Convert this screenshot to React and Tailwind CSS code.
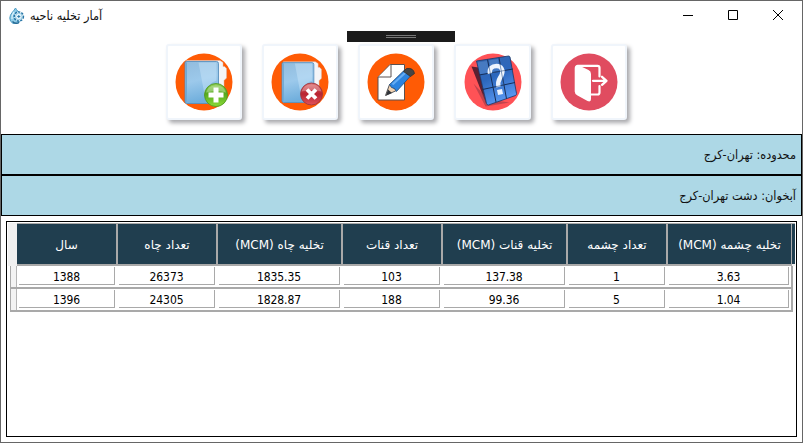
import React from 'react';

const columns = [
  { title: 'سال', cell: 'w-[100px]', values: ['1388', '1396'] },
  { title: 'تعداد چاه', cell: 'w-[100px]', values: ['26373', '24305'] },
  { title: 'تخلیه چاه (MCM)', cell: 'w-[125px]', values: ['1835.35', '1828.87'] },
  { title: 'تعداد قنات', cell: 'w-[100px]', values: ['103', '188'] },
  { title: 'تخلیه قنات (MCM)', cell: 'w-[125px]', values: ['137.38', '99.36'] },
  { title: 'تعداد چشمه', cell: 'w-[100px]', values: ['1', '5'] },
  { title: 'تخلیه چشمه (MCM)', cell: 'w-[125px]', values: ['3.63', '1.04'] },
];

function AppLogo() {
  return (
    <svg width="16" height="16" viewBox="0 0 16 16" className="shrink-0">
      <path d="M6.5 0C5 3 .8 6 .8 10a5.8 5.8 0 0 0 9 5l2-9C9.500 4 7.500 2 6.500 0Z" fill="#8fcbe6" stroke="#4d9cc4" strokeWidth="1" />
      <path d="M5 4C3.500 6 2.500 8 3 11" stroke="#d8f1fb" strokeWidth="1.300" fill="none" />
      <circle cx="9.800" cy="8.500" r="4.600" fill="#e4f4fb" stroke="#2675a6" strokeWidth="1.500" strokeDasharray="2.200 1.200" />
      <circle cx="9.800" cy="8.500" r="3.300" fill="#e4f4fb" stroke="#79b6d6" strokeWidth=".7" />
      <path d="M9.800 7v3M8.300 8.500h3" stroke="#2c7cab" strokeWidth="1" />
      <path d="M3.500 13.500c2 2 4.500 2 6.500 1" stroke="#24658f" strokeWidth="1.300" fill="none" />
    </svg>
  );
}

function Folder() {
  return (
    <>
      <path d="M11 7h33.500l3 2v4h1.500l2 2v9.500l-2.500 2.500v6L44 50H11Z" fill="#f4f5f8" stroke="#dcb9a8" strokeWidth=".5" />
      <path d="M9.500 8.500 11.500 8H41q2 0 2 2v40H11l-1.500-1Z" fill="url(#folderBlue)" stroke="#4b87b7" strokeWidth=".8" />
      <path d="M10.500 9h1v40h-1Z" fill="#6fa9d4" />
      <path d="M23 9h18v18c-6 2-10 7-12 14Z" fill="#d3eafc" opacity=".4" />
    </>
  );
}

function AddIcon() {
  return (
    <>
      <circle cx="28.500" cy="28.500" r="28.500" fill="#ff5b05" />
      <Folder />
      <circle cx="40.500" cy="41.500" r="11.500" fill="url(#badgeGreen)" stroke="#4b961c" strokeWidth=".8" />
      <path d="M30.500 39a10.500 10.500 0 0 1 20 0q-9-3-20 0Z" fill="#fff" opacity=".3" />
      <path d="M38 34h5v5h5v5h-5v5h-5v-5h-5v-5h5Z" fill="#fff" />
    </>
  );
}

function DeleteIcon() {
  return (
    <>
      <circle cx="28.500" cy="28.500" r="28.500" fill="#ff5b05" />
      <g transform="translate(1.500 1.500) scale(.95)"><Folder /></g>
      <circle cx="40" cy="40.500" r="11" fill="url(#badgeRed)" stroke="#98333b" strokeWidth=".8" />
      <path d="M30 38a10.500 10.500 0 0 1 20 0q-9-3-20 0Z" fill="#fff" opacity=".28" />
      <path d="m35.500 36 9 9m0-9-9 9" stroke="#fff" strokeWidth="3.800" />
    </>
  );
}

function EditIcon() {
  return (
    <>
      <circle cx="28.500" cy="28.500" r="28.500" fill="#ff5b05" />
      <path d="M22.500 11H37v35.500H10.500V23.500Z" fill="#fff" stroke="#5b5150" strokeWidth="1" />
      <path d="M23.500 11v12.500h-13" fill="#fff" stroke="#5b5150" strokeWidth="1" />
      <path d="m18 42 4-11 7 6Z" fill="#f2d3b2" stroke="#30343a" strokeWidth=".8" />
      <path d="m18.500 42 2-6 4 3.500Z" fill="#30343a" />
      <path d="m22 31 15-14.500 6 6L29 38l-2-3-3-1Z" fill="#2c83df" stroke="#274d79" strokeWidth=".8" />
      <path d="m25 31 13-12" stroke="#66acf2" strokeWidth="2.200" />
      <path d="m36 18 3-3q7-1 8 5l-4 3Z" fill="#454544" stroke="#303030" strokeWidth=".8" />
    </>
  );
}

function QueryIcon() {
  return (
    <>
      <circle cx="28.500" cy="28.500" r="28.500" fill="#ff5256" />
      <path d="m7 13 7 1 8 37Z" fill="#5b2031" />
      <path d="m9 30 12 23L45 49l-21-3Z" fill="#923746" opacity=".55" />
      <path d="m12 7.500 32-5q1 0 1.500 1L52 40q0 1.500-1 2l-27 9.500q-1.500 0-2-1.500Z" fill="url(#cubeBlue)" stroke="#163668" strokeWidth=".8" />
      <path d="m23 6 8.500 42.500M34.500 4.300l7.500 41M14.500 21.500 48.500 15.500M18 36 50.500 29" stroke="#162e58" strokeWidth="1" fill="none" />
      <path d="m13 9 9.500-1.500 2.300 11.500-9.500 1.800ZM24.500 7l9-1.500 2 11.500-9 1.700Z" fill="#a9d1ff" opacity=".18" />
      <path d="M25.500 20c-1-5 2-7.500 6.500-7.500 5 0 7 4 5.300 8.500-1.800 4.500-4.800 5.500-3.300 12.500" fill="none" stroke="#eef4fd" strokeWidth="4.400" />
      <path d="m32.500 36.500 5-1 1 5-5 1Z" fill="#eef4fd" />
      <path d="m24.500 13 1.500 8M35.300 9.500l4 22M27 19.300l13-2.300M29 33.700l10-2.100" stroke="#31588f" strokeWidth=".6" />
    </>
  );
}

function ExitIcon() {
  return (
    <>
      <circle cx="28.500" cy="28.500" r="28.500" fill="#e04c60" />
      <path d="M17 12.300h20q2 0 2 2V23M39 32.500V39q0 2-2 2h-8" stroke="#fff" strokeWidth="2.200" fill="none" strokeLinecap="round" />
      <path d="M14.200 15q0-4 3.300-3.500l10.500 5q2.500 1.200 2.500 4v25q0 3.500-3.500 2l-10-5.500q-2.800-1.500-2.800-4Z" fill="#fff" />
      <path d="M32.500 27.300H46m-4.500-4 4.500 4-4.500 4" stroke="#fff" strokeWidth="2.300" fill="none" strokeLinecap="round" strokeLinejoin="round" />
    </>
  );
}

const tools = [
  { label: 'افزودن', Icon: AddIcon },
  { label: 'حذف', Icon: DeleteIcon },
  { label: 'ویرایش', Icon: EditIcon },
  { label: 'جستجو', Icon: QueryIcon },
  { label: 'خروج', Icon: ExitIcon },
];

function GradientDefs() {
  return (
    <svg className="absolute h-0 w-0" aria-hidden="true">
      <defs>
        <linearGradient id="folderBlue" x1="0" y1="0" x2=".2" y2="1">
          <stop offset="0" stopColor="#92bcdd" /><stop offset=".5" stopColor="#9cc9eb" /><stop offset="1" stopColor="#6faedc" />
        </linearGradient>
        <linearGradient id="badgeGreen" x1="0" y1="0" x2="0" y2="1">
          <stop offset="0" stopColor="#8fce55" /><stop offset=".45" stopColor="#56a91f" /><stop offset="1" stopColor="#8bdb38" />
        </linearGradient>
        <linearGradient id="badgeRed" x1="0" y1="0" x2="0" y2="1">
          <stop offset="0" stopColor="#dc6869" /><stop offset=".5" stopColor="#b92330" /><stop offset="1" stopColor="#e0545b" />
        </linearGradient>
        <linearGradient id="cubeBlue" x1="0" y1="0" x2=".4" y2="1">
          <stop offset="0" stopColor="#3767ad" /><stop offset=".5" stopColor="#2c67bd" /><stop offset="1" stopColor="#5695ef" />
        </linearGradient>
      </defs>
    </svg>
  );
}

function Banner({ children }) {
  return (
    <div dir="rtl" className="flex h-[41px] shrink-0 items-center border border-black bg-[#add8e6] px-[5px] pt-[2px] text-[12.6px] text-[#111]">
      <span>{children}</span>
    </div>
  );
}

function DataRow({ index }) {
  return (
    <div className="flex h-[23px] w-[783px] border-b-2 border-l border-r-2 border-[#a9a9a9] bg-white">
      <div className="w-[6px] border-r border-[#b5b5b5] bg-[#f3f3f3]" />
      {columns.map((column) => (
        <div key={column.title} className={`${column.cell} flex shrink-0 pl-[2px] pr-[2px] pt-px pb-[2px] last:w-[124px]`}>
          <div className="flex grow items-center justify-center border-b border-r border-[#a9a9a9] pt-[2px] text-[12px] leading-none tracking-[-0.1px] text-black">
            {column.values[index]}
          </div>
        </div>
      ))}
    </div>
  );
}

export default function App() {
  return (
    <div className="flex h-[443px] w-[803px] flex-col overflow-hidden border border-[#666] bg-white font-['DejaVu_Sans_Condensed','DejaVu_Sans',sans-serif]">
      <GradientDefs />
      <header className="flex h-[30px] shrink-0 items-center justify-between pl-2">
        <div className="flex items-center gap-[5px] text-[12.6px] text-[#111]">
          <AppLogo />
          <span dir="rtl">آمار تخلیه ناحیه</span>
        </div>
        <div className="mb-[2px] flex gap-[35px] pr-[19px]">
          <svg width="10" height="10"><path d="M0 5.500h10" stroke="#000" /></svg>
          <svg width="10" height="10"><path d="M.5.500h9v9h-9Z" stroke="#000" fill="none" /></svg>
          <svg width="10" height="10"><path d="m0 0 10 10M10 0 0 10" stroke="#000" fill="none" /></svg>
        </div>
      </header>

      <div className="flex h-[103px] shrink-0 flex-col">
        <div className="ml-[346px] flex h-[11px] w-[108px] flex-col items-center gap-px bg-[#1b1b1b] pt-1">
          <div className="h-px w-[30px] bg-[#777]" />
          <div className="h-px w-[30px] bg-[#777]" />
        </div>
        <div className="flex gap-[20px] pl-[164.500px] pt-[2px]">
          {tools.map(({ label, Icon }) => (
            <button key={label} aria-label={label} className="flex h-[76px] w-[76.300px] items-center justify-center rounded-[3px] border-2 border-[#f0f5fb] bg-white shadow-[3px_3px_4px_#a8a8ac]">
              <svg width="58" height="58" viewBox="-.5 -.5 58 58"><Icon /></svg>
            </button>
          ))}
        </div>
      </div>

      <Banner>محدوده: تهران-کرج</Banner>
      <Banner>آبخوان: دشت تهران-کرج</Banner>

      <main className="mx-[5px] mt-[5px] h-[216px] shrink-0 border border-black pl-px pt-px">
        <div className="flex h-[43px] w-[787px] bg-[#f0f0f0] pl-[9px]">
          {columns.map((column) => (
            <div dir="rtl" key={column.title} className={`${column.cell} flex shrink-0 items-center justify-center border-b-2 border-l border-r border-t border-[#a9a9a9] bg-[#203e4f] pt-[2px] font-['DejaVu_Sans',sans-serif] text-[12px] text-white first:border-l-0`}>
              <span className="whitespace-nowrap">{column.title}</span>
            </div>
          ))}
          <div className="mb-[2px] grow border-t border-[#a9a9a9] bg-[#203e4f]" />
        </div>
        <div className="ml-[2px]">
          <DataRow index={0} />
          <DataRow index={1} />
        </div>
      </main>
    </div>
  );
}
